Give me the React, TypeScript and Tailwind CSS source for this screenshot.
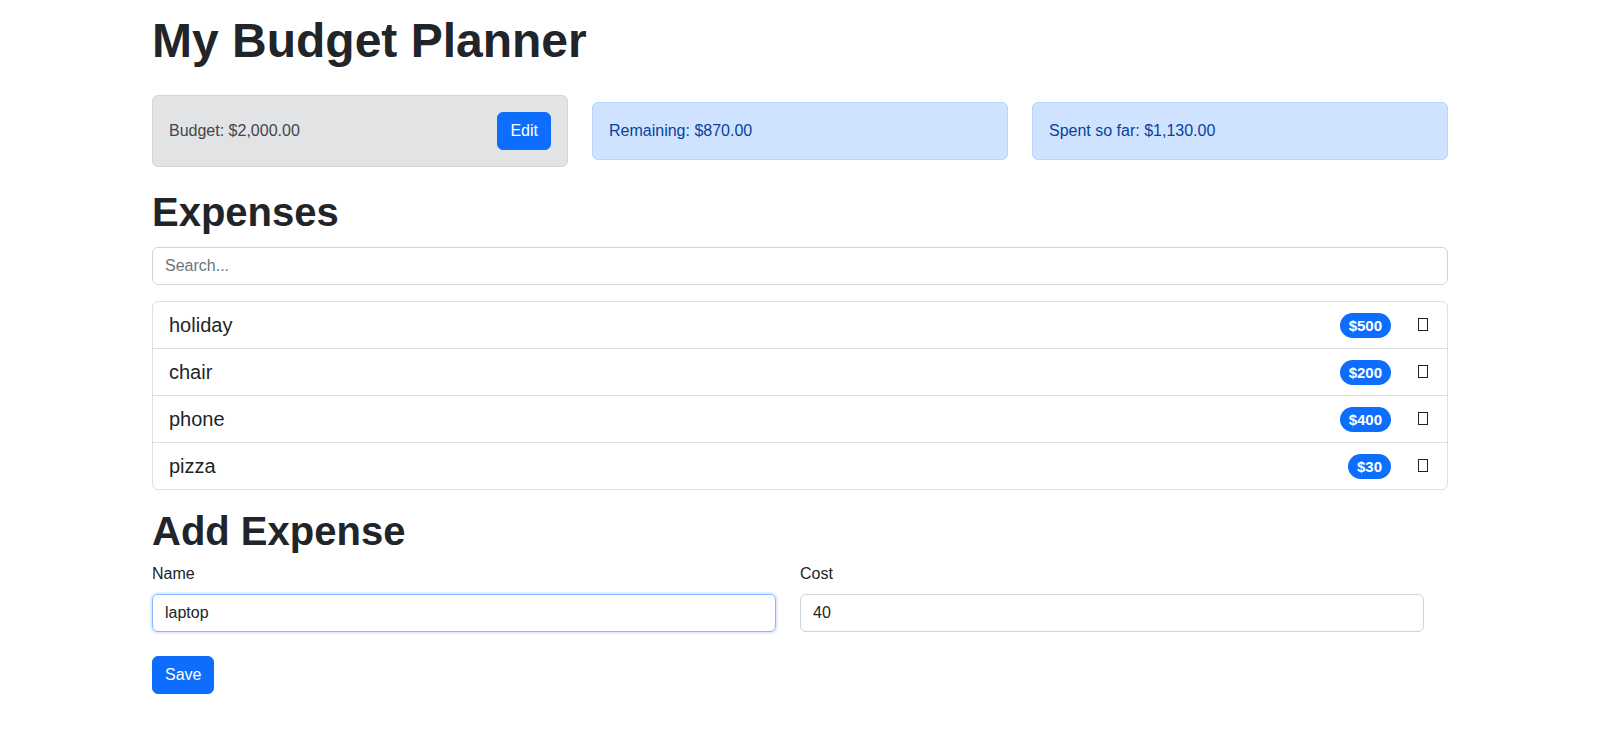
import React from "react";

const expenses = [
  { id: 1, name: "holiday", cost: 500 },
  { id: 2, name: "chair", cost: 200 },
  { id: 3, name: "phone", cost: 400 },
  { id: 4, name: "pizza", cost: 30 },
];

function ExpenseItem({ name, cost }: { name: string; cost: number }) {
  return (
    <li className="flex items-center justify-between border-t border-[#dfdfdf] px-4 py-2 text-[20px] leading-[30px] first:border-t-0">
      <span>{name}</span>
      <div className="flex items-center">
        <span className="mt-[2px] rounded-full bg-[#0d6efd] px-[9px] py-[5px] text-[15px] leading-[15px] font-bold text-white">
          ${cost}
        </span>
        {/* icon font glyph that never loaded */}
        <span className="ml-[27px] mr-[3px] inline-block h-[13px] w-[10px] border border-[#222]" />
      </div>
    </li>
  );
}

export default function App() {
  return (
    <div className="min-h-screen bg-white font-['Liberation_Sans',Arial,sans-serif] text-[#212529]">
      <div className="mx-auto max-w-[1320px] px-3 pt-3">
        <h1 className="text-[48px] leading-[1.2] font-bold">My Budget Planner</h1>

        <div className="mt-[25px] grid grid-cols-3 items-center gap-6">
          <div className="flex items-center justify-between rounded-md border border-[#d3d6d8] bg-[#e2e3e5] p-4 text-base leading-6 text-[#41464b]">
            <span>Budget: $2,000.00</span>
            <button className="rounded-md border border-[#0d6efd] bg-[#0d6efd] px-3 py-1.5 text-base leading-6 text-white">
              Edit
            </button>
          </div>
          <div className="rounded-md border border-[#b6d4fe] bg-[#cfe2ff] p-4 text-base leading-6 text-[#084298]">
            <span>Remaining: $870.00</span>
          </div>
          <div className="rounded-md border border-[#b6d4fe] bg-[#cfe2ff] p-4 text-base leading-6 text-[#084298]">
            <span>Spent so far: $1,130.00</span>
          </div>
        </div>

        <h2 className="mt-[21px] text-[40px] leading-[1.2] font-bold">Expenses</h2>
        <input
          type="text"
          placeholder="Search..."
          className="mt-[11px] block h-[38px] w-full rounded-md border border-[#ced4da] px-3 text-base text-[#212529] outline-none placeholder:text-[#6c757d]"
        />
        <ul className="mt-4 rounded-md border border-[#dfdfdf]">
          {expenses.map((e) => (
            <ExpenseItem key={e.id} name={e.name} cost={e.cost} />
          ))}
        </ul>

        <h2 className="mt-[17px] text-[40px] leading-[1.2] font-bold">Add Expense</h2>
        <form onSubmit={(e) => e.preventDefault()}>
          <div className="grid grid-cols-2 gap-6 pr-6">
            <div>
              <label className="mt-[7px] block text-base leading-6">Name</label>
              <input
                type="text"
                defaultValue="laptop"
                className="mt-2 block h-[38px] w-full rounded-md border border-[#86b7fe] px-3 text-base text-[#212529] shadow-[0_0_0_2px_rgba(13,110,253,0.12)] outline-none"
              />
            </div>
            <div>
              <label className="mt-[7px] block text-base leading-6">Cost</label>
              <input
                type="text"
                defaultValue="40"
                className="mt-2 block h-[38px] w-full rounded-md border border-[#ced4da] px-3 text-base text-[#212529] outline-none"
              />
            </div>
          </div>
          <button
            type="submit"
            className="mt-6 h-[38px] rounded-md border border-[#0d6efd] bg-[#0d6efd] px-3 text-base leading-6 text-white"
          >
            Save
          </button>
        </form>
      </div>
    </div>
  );
}
